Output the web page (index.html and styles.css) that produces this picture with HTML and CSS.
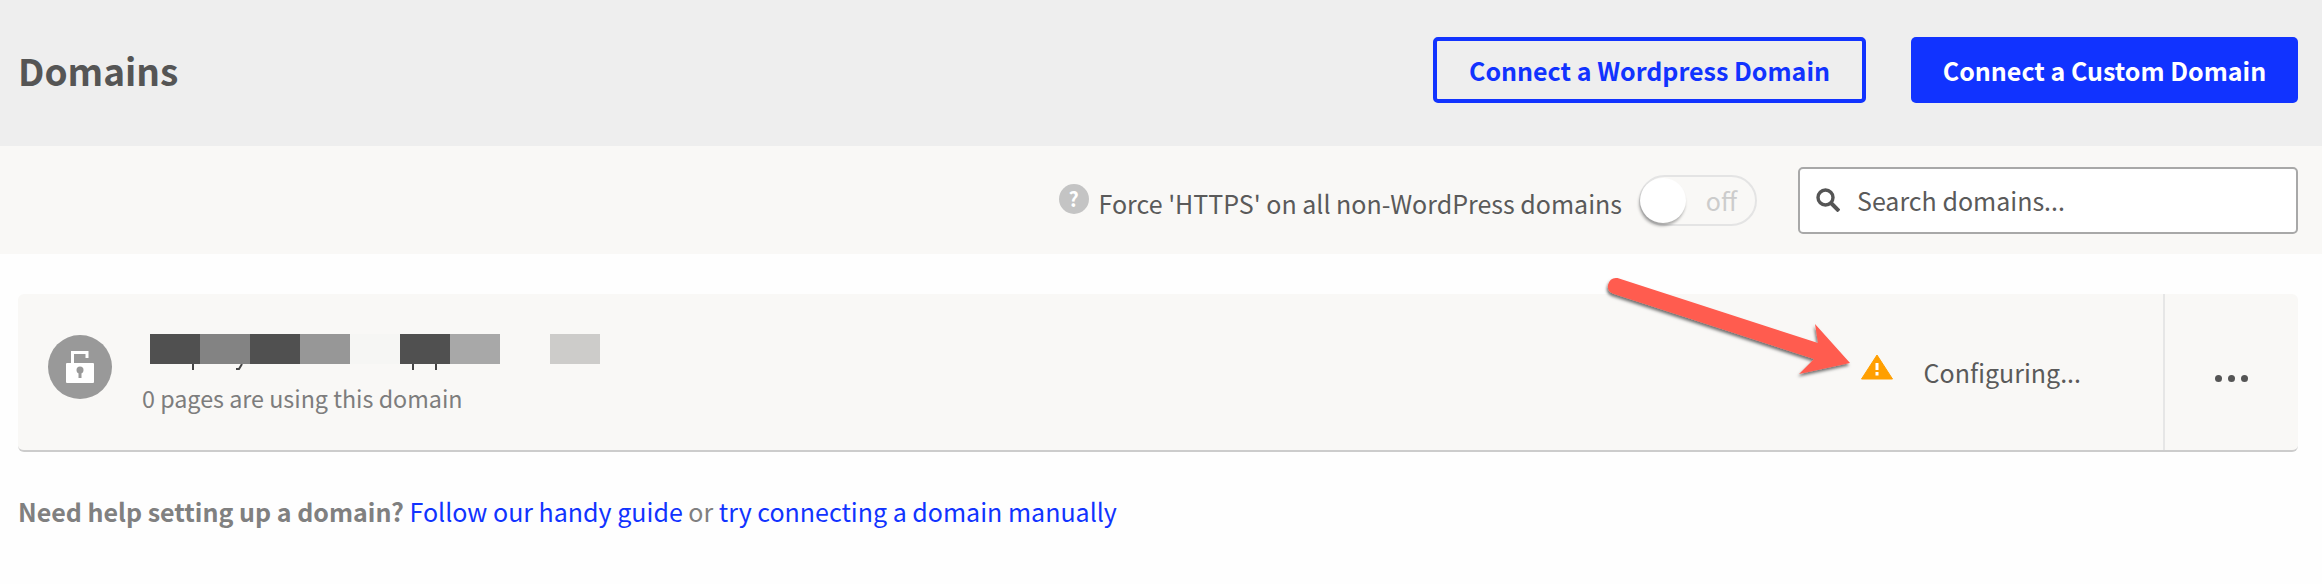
FILE: index.html
```html
<!DOCTYPE html>
<html lang="en">
<head>
<meta charset="utf-8">
<title>Domains</title>
<link rel="stylesheet" href="styles.css">
</head>
<body>
<header class="top">
  <h1 class="title">Domains</h1>
  <div class="actions">
    <a class="btn btn-outline">Connect a Wordpress Domain</a>
    <a class="btn btn-solid">Connect a Custom Domain</a>
  </div>
</header>
<section class="toolbar">
  <span class="help">?</span>
  <span class="force">Force 'HTTPS' on all non-WordPress domains</span>
  <div class="toggle"><span class="knob"></span><span class="off">off</span></div>
  <div class="search">
    <svg class="search-icon" viewBox="0 0 24 24" width="24" height="24"><circle cx="9.5" cy="9.5" r="7.5" fill="none" stroke="#555" stroke-width="3.4"/><path d="M15 15l8 8" stroke="#555" stroke-width="4"/></svg>
    <span class="placeholder">Search domains...</span>
  </div>
</section>
<main class="content">
  <article class="card">
    <div class="lock">
      <svg viewBox="0 0 28 32" width="28" height="32"><path d="M6.500 12V1.500H21V7" fill="none" stroke="#fff" stroke-width="3"/><path d="M1 12h26a1 1 0 0 1 1 1v18a1 1 0 0 1-1 1H1a1 1 0 0 1-1-1V13a1 1 0 0 1 1-1z" fill="#fff"/><circle cx="14" cy="19" r="3.500" fill="#999"/><path d="M12.500 20h3v7h-3z" fill="#999"/></svg>
    </div>
    <div class="info">
      <div class="redacted">
        <i class="px p1"></i><i class="px p2"></i><i class="px p1"></i><i class="px p3"></i><i class="px p4"></i><i class="px p1"></i><i class="px p5"></i><i class="px p0"></i><i class="px p6"></i>
      </div>
      <svg class="descenders" viewBox="0 0 460 6" width="460" height="6"><path d="M43 0v6" stroke="#444" stroke-width="2"/><path d="M92 0l-3 5h-3" fill="none" stroke="#444" stroke-width="2"/><path d="M263 0v6M286 0v6" stroke="#444" stroke-width="2"/></svg>
      <div class="pages">0 pages are using this domain</div>
    </div>
    <div class="status">
      <svg class="warn" viewBox="0 0 32 26" width="32" height="26"><path d="M16 1 31.500 25H.5z" fill="#ff9f00" stroke="#ff9f00" stroke-linejoin="round"/><path d="M14.500 9h3v7h-3zM14.500 18h3v3.500h-3z" fill="#fff"/></svg>
      <span>Configuring...</span>
    </div>
    <div class="more"><i></i><i></i><i></i></div>
  </article>
  <p class="footer"><b>Need help setting up a domain?</b> <a>Follow our handy guide</a> or <a>try connecting a domain manually</a></p>
</main>
<svg class="arrow" viewBox="0 0 2322 584" width="2322" height="584">
  <defs><filter id="sh" x="-10%" y="-20%" width="120%" height="140%"><feDropShadow dx="-1" dy="2.500" stdDeviation="1.500" flood-color="#000" flood-opacity=".55"/></filter></defs>
  <path filter="url(#sh)" fill="#ff5b4f" d="M1617.500 278 1818 343 1815 324 1850 363 1799 374 1814 359 1612.500 293.500Q1607 291 1608 285 1610 277 1617.500 278Z"/>
</svg>
</body>
</html>
```
FILE: styles.css
```css
* { box-sizing: border-box; }
html, body { margin: 0; height: 100%; }
body {
  position: relative;
  overflow: hidden;
  background: #fefefe;
  color: #555;
  font-family: "Noto Sans CJK SC", "Noto Sans", sans-serif;
  font-size: 26px;
}
.top {
  height: 146px;
  background: #eee;
  display: flex;
  align-items: center;
  justify-content: space-between;
  padding: 0 24px 6px 18px;
}
.title { margin: 0; font-size: 37px; font-weight: 700; color: #555; }
.actions { display: flex; gap: 45px; }
.btn {
  height: 66px;
  display: flex;
  align-items: center;
  justify-content: center;
  border-radius: 5px;
  font-size: 25px;
  font-weight: 700;
}
.btn-outline { width: 433px; border: 4px solid #1133ff; color: #1133ff; }
.btn-solid { width: 387px; background: #1133ff; color: #fff; }
.toolbar {
  height: 108px;
  background: #f9f8f6;
  display: flex;
  align-items: center;
  justify-content: flex-end;
  padding: 0 24px 0 0;
}
.help {
  width: 30px;
  height: 30px;
  margin: -3px 10px 0 0;
  border-radius: 50%;
  background: #c4c4c4;
  color: #fff;
  font-size: 20px;
  font-weight: 700;
  line-height: 30px;
  text-align: center;
}
.force { padding-top: 5px; font-size: 25px; color: #5a5a5a; }
.toggle {
  width: 118px;
  height: 51px;
  margin: 0 41px 0 17px;
  border: 2px solid #e4e4e4;
  border-radius: 26px;
  display: flex;
  align-items: center;
  justify-content: space-between;
  padding-right: 18px;
}
.knob {
  width: 46px;
  height: 45px;
  margin-left: -1px;
  border-radius: 50%;
  background: #fff;
  box-shadow: -1px 3px 3px rgba(0,0,0,.3);
}
.off { color: #ccc; font-size: 25px; }
.search {
  width: 500px;
  height: 67px;
  background: #fff;
  border: 2px solid #a8a8a8;
  border-radius: 5px;
  display: flex;
  align-items: center;
  gap: 17px;
  padding-left: 16px;
}
.placeholder { font-size: 25px; color: #5a5a5a; }
.content { padding: 40px 24px 0 18px; }
.card {
  height: 158px;
  background: #f9f8f6;
  border-bottom: 2px solid #ccc;
  border-radius: 6px;
  display: flex;
  align-items: stretch;
}
.lock {
  width: 64px;
  height: 64px;
  margin: 41px 30px 0 30px;
  border-radius: 50%;
  background: #999;
  display: flex;
  align-items: center;
  justify-content: center;
}
.info { padding-top: 40px; flex: 1; }
.redacted { display: flex; margin-left: 8px; }
.descenders { display: block; margin-left: 8px; }
.px { width: 50px; height: 30px; display: block; }
.p0 { background: transparent; }
.p1 { background: #505050; }
.p2 { background: #838383; }
.p3 { background: #979797; }
.p4 { background: #f6f6f4; }
.p5 { background: #a8a8a8; }
.p6 { background: #cdccca; }
.pages { margin-top: 11px; font-size: 23.3px; color: #7d7d7d; }
.status {
  display: flex;
  align-items: center;
  gap: 31px;
  padding: 0 82px 0 0;
  font-size: 25px;
  color: #5a5a5a;
}
.warn { margin-top: -11px; }
.more {
  width: 135px;
  border-left: 2px solid #e6e6e6;
  display: flex;
  align-items: center;
  justify-content: center;
  gap: 6px;
  padding-top: 12px;
}
.more i { width: 7px; height: 7px; border-radius: 50%; background: #555; }
.footer { margin: 41px 0 0; font-size: 25px; color: #808080; }
.footer a { color: #1133ff; }
.arrow { position: absolute; left: 0; top: 0; pointer-events: none; }
```
